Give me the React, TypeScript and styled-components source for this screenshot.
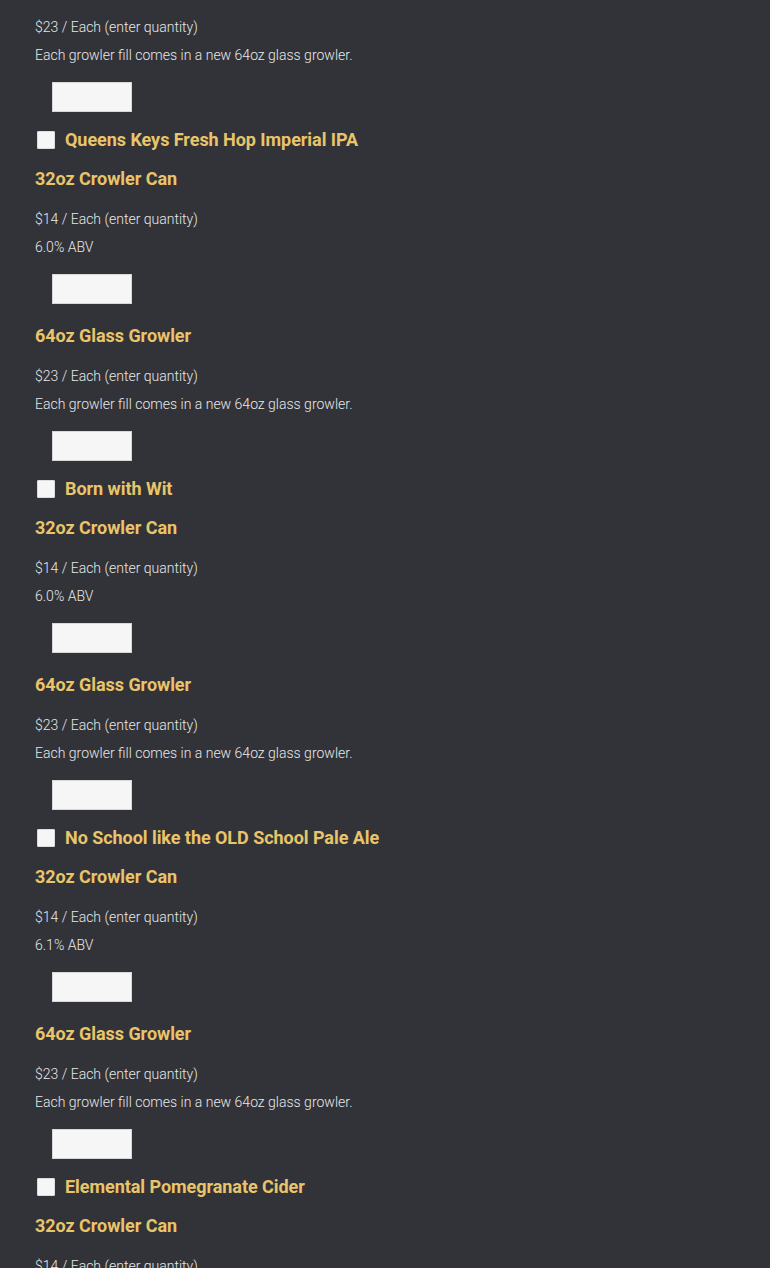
import React from 'react';
import styled, { createGlobalStyle } from 'styled-components';

type Option = {
    title?: string;
    price: string;
    note: string;
};

type Product = {
    name: string;
    abv: string;
};

const growler = (title?: string): Option => ({
    title,
    price: '$23 / Each (enter quantity)',
    note: 'Each growler fill comes in a new 64oz glass growler.',
});

const products: Product[] = [
    { name: 'Queens Keys Fresh Hop Imperial IPA', abv: '6.0% ABV' },
    { name: 'Born with Wit', abv: '6.0% ABV' },
    { name: 'No School like the OLD School Pale Ale', abv: '6.1% ABV' },
    { name: 'Elemental Pomegranate Cider', abv: '6.0% ABV' },
];

const OptionBlock = ({ option }: { option: Option }) => (
    <OptionWrapper>
        {option.title && <OptionTitle>{option.title}</OptionTitle>}
        <Line>{option.price}</Line>
        <Line>{option.note}</Line>
        <QtyInput type="text" />
    </OptionWrapper>
);

const App = () => {
    return (
        <>
            <GlobalStyle />
            <Page>
                <OptionBlock option={growler()} />
                {products.map((p) => (
                    <ProductWrapper key={p.name}>
                        <ProductRow>
                            <Check type="checkbox" />
                            <ProductName>{p.name}</ProductName>
                        </ProductRow>
                        <OptionBlock
                            option={{
                                title: '32oz Crowler Can',
                                price: '$14 / Each (enter quantity)',
                                note: p.abv,
                            }}
                        />
                        <OptionBlock option={growler('64oz Glass Growler')} />
                    </ProductWrapper>
                ))}
            </Page>
        </>
    );
};

export default App;

const GlobalStyle = createGlobalStyle`
    html, body {
        margin: 0;
        padding: 0;
        background: #313338;
    }
    body {
        font-family: Roboto, "Liberation Sans", sans-serif;
        color: #e6e6e6;
    }
`;

const Page = styled.div`
    padding: 13px 35px 0;
    height: 1268px;
    box-sizing: border-box;
    overflow: hidden;
`;

const ProductWrapper = styled.section`
    margin-top: 13px;
`;

const ProductRow = styled.label`
    display: flex;
    align-items: center;
    height: 30px;
    gap: 10px;
    margin-bottom: 9px;
`;

const Check = styled.input`
    appearance: none;
    margin: 0 0 0 2px;
    width: 18px;
    height: 18px;
    background: #f6f6f6;
    border: 1px solid #dcdcdc;
    border-radius: 1px;
    box-sizing: border-box;
`;

const ProductName = styled.span`
    font-size: 18px;
    font-weight: 700;
    color: #e9c46a;
    line-height: 30px;
    letter-spacing: -0.05px;
`;

const OptionWrapper = styled.div`
    & + & {
        margin-top: 17px;
    }
`;

const OptionTitle = styled.h3`
    margin: 0 0 11px;
    font-size: 18px;
    font-weight: 700;
    line-height: 30px;
    color: #e9c46a;
    letter-spacing: -0.05px;
`;

const Line = styled.p`
    margin: 0;
    font-size: 14px;
    font-weight: 300;
    line-height: 28px;
    color: #e8e8e8;
`;

const QtyInput = styled.input`
    display: block;
    margin: 13px 0 0 17px;
    width: 80px;
    height: 30px;
    box-sizing: border-box;
    background: #f6f6f6;
    border: 1px solid #d8d8d8;
    padding: 0 6px;
    outline: none;
`;
